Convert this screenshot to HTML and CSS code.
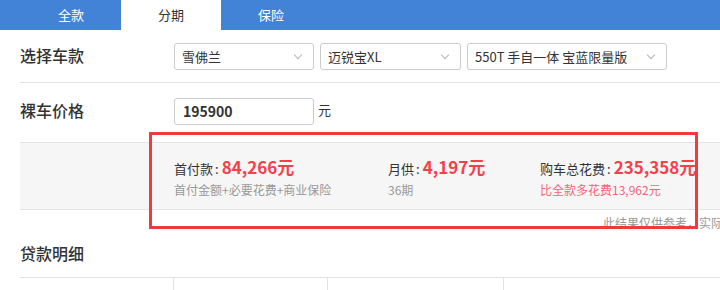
FILE: index.html
```html
<!DOCTYPE html>
<html lang="zh-CN">
<head>
  <meta charset="UTF-8">
  <title>贷款计算器</title>
  <link rel="stylesheet" href="styles.css">
</head>
<body>
  <div class="tabs">
    <div class="tab">全款</div>
    <div class="tab active">分期</div>
    <div class="tab">保险</div>
  </div>

  <div class="content">
    <div class="row row-car">
      <div class="label">选择车款</div>
      <div class="select sel-brand">雪佛兰<span class="chev"></span></div>
      <div class="select sel-series">迈锐宝XL<span class="chev"></span></div>
      <div class="select sel-model">550T 手自一体 宝蓝限量版<span class="chev"></span></div>
    </div>

    <div class="row row-price">
      <div class="label">裸车价格</div>
      <div class="input">195900</div>
      <span class="unit">元</span>
    </div>

    <div class="result">
      <div class="item item-down">
        <div class="item-main">首付款<span class="colon">:</span><b>84,266元</b></div>
        <div class="item-sub">首付金额+必要花费+商业保险</div>
      </div>
      <div class="item item-month">
        <div class="item-main">月供<span class="colon">:</span><b>4,197元</b></div>
        <div class="item-sub">36期</div>
      </div>
      <div class="item item-total">
        <div class="item-main">购车总花费<span class="colon">:</span><b>235,358元</b></div>
        <div class="item-sub pink">比全款多花费13,962元</div>
      </div>
    </div>

    <div class="note">此结果仅供参考，实际</div>

    <h2 class="section-title">贷款明细</h2>
    <div class="detail">
      <div class="cell c1"></div>
      <div class="cell c2"></div>
      <div class="cell c3"></div>
      <div class="cell c4"></div>
    </div>
  </div>

  <!-- annotation frame drawn over the result band -->
  <div class="mark"></div>
</body>
</html>
```

FILE: styles.css
```css
body {
  margin: 0;
  font-family: "Noto Sans CJK SC", "Microsoft YaHei", sans-serif;
  color: #333;
  overflow: hidden;
  position: relative;
}
.tabs {
  display: flex;
  height: 30px;
  background-color: #4283d8;
  padding-left: 21px;
}
.tab {
  width: 100px;
  line-height: 30px;
  text-align: center;
  font-size: 13px;
  color: #fff;
}
.tab.active {
  background-color: #fff;
  color: #333;
}
.content {
  padding-left: 20px;
}
.row {
  display: flex;
  align-items: center;
}
.row-car {
  height: 52px;
  border-bottom: 1px solid #e3e3e3;
}
.row-price {
  height: 57px;
  padding-bottom: 2px;
}
.label {
  width: 154px;
  font-size: 16px;
  font-weight: 500;
  line-height: 20px;
  padding-bottom: 3px;
  color: #333;
}
.select, .input {
  box-sizing: border-box;
  height: 27px;
  border: 1px solid #ccc;
  border-radius: 3px;
  font-size: 13px;
  line-height: 25px;
  padding-left: 7px;
  position: relative;
  background: #fff;
}
.sel-brand { width: 140px; margin-right: 6px; }
.sel-series { width: 141px; margin-right: 6px; }
.sel-model { width: 200px; }
.chev {
  position: absolute;
  right: 12px;
  top: 8px;
  width: 5px;
  height: 5px;
  border-right: 1px solid #b5b5b5;
  border-bottom: 1px solid #b5b5b5;
  transform: rotate(45deg);
}
.input {
  width: 140px;
  font-weight: bold;
  font-size: 14px;
  padding-left: 8px;
}
.unit {
  font-size: 13px;
  margin-left: 4px;
  line-height: 18px;
  padding-bottom: 4px;
}
.result {
  display: flex;
  height: 66px;
  background-color: #f6f6f6;
  border-top: 1px solid #e3e3e3;
  border-bottom: 1px solid #e3e3e3;
  padding-left: 154px;
}
.item {
  padding-top: 13px;
}
.item-down { width: 214px; }
.item-month { width: 152px; }
.item-main {
  font-size: 13px;
  line-height: 22px;
  color: #333;
}
.colon {
  margin: 0 3px 0 2px;
}
.item-main b {
  font-size: 17px;
  color: #f5404c;
  font-weight: bold;
}
.item-sub {
  font-size: 12px;
  color: #999;
  line-height: 18px;
  margin-top: 1px;
}
.item-sub.pink {
  color: #f5627a;
}
.note {
  font-size: 12px;
  color: #999;
  white-space: nowrap;
  padding-left: 583px;
  line-height: 26px;
}
.section-title {
  margin: 0;
  font-size: 16px;
  font-weight: 500;
  line-height: 22px;
  padding-top: 6px;
  height: 35px;
}
.detail {
  display: flex;
  border-top: 1px solid #e3e3e3;
  height: 20px;
}
.cell {
  border-right: 1px solid #e3e3e3;
}
.c1 { width: 153px; }
.c2 { width: 153px; }
.c3 { width: 175px; }
.c4 { flex: 1; border-right: none; }
.mark {
  position: absolute;
  left: 149px;
  top: 132px;
  width: 543px;
  height: 91px;
  border: 3px solid #f23a3a;
}
```
